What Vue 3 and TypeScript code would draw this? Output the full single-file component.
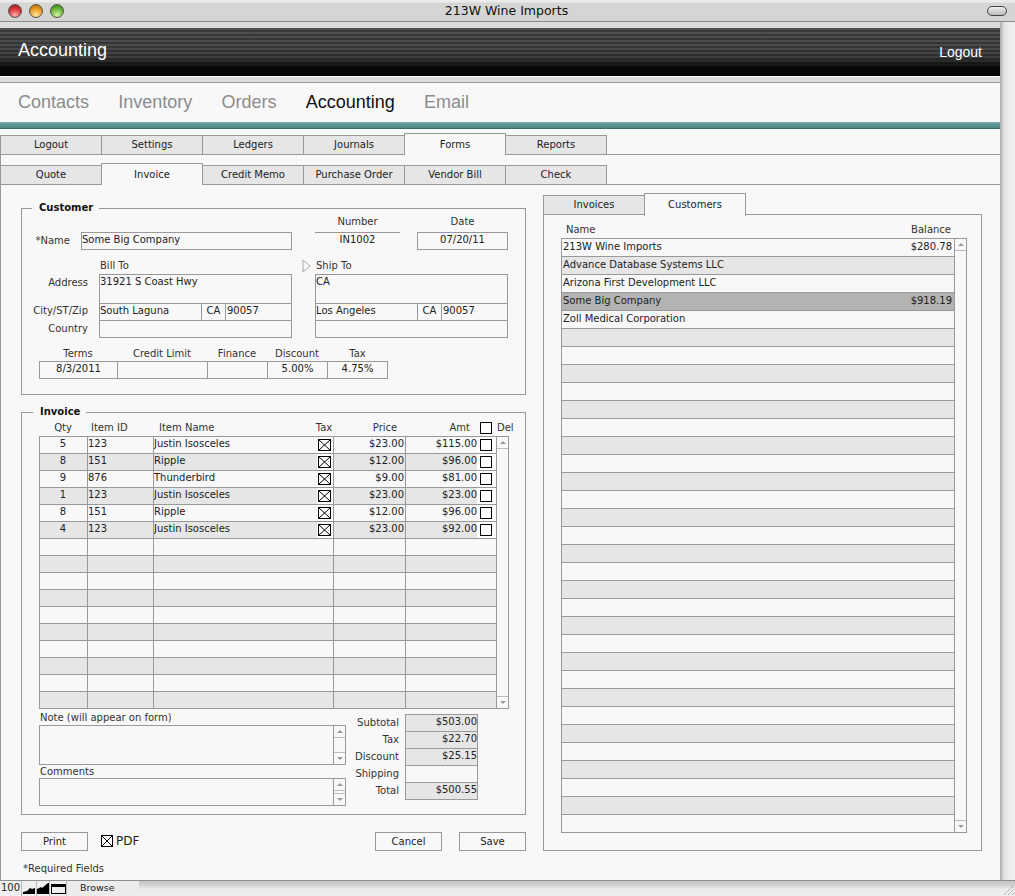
<script setup lang="ts">
const topTabs: string[] = ['Logout', 'Settings', 'Ledgers', 'Journals', 'Forms', 'Reports']
const subTabs: string[] = ['Quote', 'Invoice', 'Credit Memo', 'Purchase Order', 'Vendor Bill', 'Check']
const nav: string[] = ['Contacts', 'Inventory', 'Orders', 'Accounting', 'Email']

interface Address { title: string; address: string; city: string; st: string; zip: string }
const addresses: Address[] = [
  { title: 'Bill To', address: '31921 S Coast Hwy', city: 'South Laguna', st: 'CA', zip: '90057' },
  { title: 'Ship To', address: 'CA', city: 'Los Angeles', st: 'CA', zip: '90057' },
]
const terms = [
  { h: 'Terms', v: '8/3/2011', w: 78 },
  { h: 'Credit Limit', v: '', w: 90 },
  { h: 'Finance', v: '', w: 60 },
  { h: 'Discount', v: '5.00%', w: 60 },
  { h: 'Tax', v: '4.75%', w: 61 },
]
interface Line { qty: string; id: string; name: string; price: string; amt: string }
const filled: Line[] = [
  { qty: '5', id: '123', name: 'Justin Isosceles', price: '$23.00', amt: '$115.00' },
  { qty: '8', id: '151', name: 'Ripple', price: '$12.00', amt: '$96.00' },
  { qty: '9', id: '876', name: 'Thunderbird', price: '$9.00', amt: '$81.00' },
  { qty: '1', id: '123', name: 'Justin Isosceles', price: '$23.00', amt: '$23.00' },
  { qty: '8', id: '151', name: 'Ripple', price: '$12.00', amt: '$96.00' },
  { qty: '4', id: '123', name: 'Justin Isosceles', price: '$23.00', amt: '$92.00' },
]
const blanks: number[] = Array.from({ length: 10 }, (_, i) => i)
const totals = [
  { l: 'Subtotal', v: '$503.00', grey: true },
  { l: 'Tax', v: '$22.70', grey: true },
  { l: 'Discount', v: '$25.15', grey: true },
  { l: 'Shipping', v: '', grey: false },
  { l: 'Total', v: '$500.55', grey: true },
]
const customers = [
  { n: '213W Wine Imports', b: '$280.78' },
  { n: 'Advance Database Systems LLC', b: '' },
  { n: 'Arizona First Development LLC', b: '' },
  { n: 'Some Big Company', b: '$918.19', sel: true },
  { n: 'Zoll Medical Corporation', b: '' },
  ...Array.from({ length: 28 }, () => ({ n: '', b: '' })),
]
</script>

<template>
  <div class="screen">
    <header class="titlebar">
      <div class="lights">
        <span class="light red"></span><span class="light amber"></span><span class="light green"></span>
      </div>
      <span class="title">213W Wine Imports</span>
      <span class="pill"></span>
    </header>
    <div class="middle">
      <div class="win">
        <div class="strip"></div>
        <div class="hero">
          <span class="hero-title">Accounting</span>
          <span class="hero-logout">Logout</span>
        </div>
        <div class="strip2"></div>
        <nav class="nav">
          <span v-for="n in nav" :key="n" class="nav-item" :class="{ on: n === 'Accounting' }">{{ n }}</span>
        </nav>
        <div class="teal"></div>
        <div class="tabs first">
          <span v-for="t in topTabs" :key="t" class="tab" :class="{ active: t === 'Forms' }">{{ t }}</span>
        </div>
        <div class="tabs second">
          <span v-for="t in subTabs" :key="t" class="tab" :class="{ active: t === 'Invoice' }">{{ t }}</span>
        </div>
        <main class="body">
          <div class="left">
            <section class="group cust">
              <span class="legend">Customer</span>
              <div class="row-name">
                <span class="lbl name-lbl">*Name</span>
                <span class="field f-name">Some Big Company</span>
                <div class="col f-number">
                  <span class="cap">Number</span>
                  <span class="field numfield">IN1002</span>
                </div>
                <div class="col f-date">
                  <span class="cap">Date</span>
                  <span class="field center">07/20/11</span>
                </div>
              </div>
              <div class="row-addr">
                <div class="addr-labels">
                  <span class="al a1">Address</span>
                  <span class="al a2">City/ST/Zip</span>
                  <span class="al a3">Country</span>
                </div>
                <div v-for="(a, i) in addresses" :key="a.title" class="addr" :class="{ ship: i === 1 }">
                  <div class="addr-title">
                    <svg v-if="i === 1" class="copy" width="9" height="14" viewBox="0 0 9 14">
                      <path d="M1 1 L8 7 L1 13 Z" fill="#f8f8f8" stroke="#aaa" />
                    </svg>
                    {{ a.title }}
                  </div>
                  <div class="addr-box">
                    <div class="addr-line tall">{{ a.address }}</div>
                    <div class="addr-line split">
                      <span class="c-city">{{ a.city }}</span><span class="c-st">{{ a.st }}</span><span class="c-zip">{{ a.zip }}</span>
                    </div>
                    <div class="addr-line last"></div>
                  </div>
                </div>
              </div>
              <div class="terms">
                <div v-for="t in terms" :key="t.h" class="term" :style="{ width: t.w + 'px' }">
                  <span class="term-h">{{ t.h }}</span>
                  <span class="term-v">{{ t.v }}</span>
                </div>
              </div>
            </section>

            <section class="group inv">
              <span class="legend">Invoice</span>
              <div class="inv-head">
                <span class="h-qty">Qty</span>
                <span class="h-id">Item ID</span>
                <span class="h-name">Item Name</span>
                <span class="h-tax">Tax</span>
                <span class="h-price">Price</span>
                <span class="h-amt">Amt</span>
                <span class="check head-check"></span>
                <span class="h-del">Del</span>
              </div>
              <div class="inv-list">
                <div class="inv-rows">
                  <div v-for="(l, i) in filled" :key="i" class="inv-row" :class="{ alt: i % 2 === 1 }">
                    <span class="cell tc">{{ l.qty }}</span>
                    <span class="cell">{{ l.id }}</span>
                    <span class="cell name-cell">
                      <span>{{ l.name }}</span>
                      <span class="check-wrap tax-wrap">
                        <svg class="xbox" width="13" height="12" viewBox="0 0 13 12"><rect x=".5" y=".5" width="12" height="11" fill="#fff" stroke="#000" /><path d="M1 1 L12 11 M12 1 L1 11" stroke="#000" /></svg>
                      </span>
                    </span>
                    <span class="cell tr">{{ l.price }}</span>
                    <span class="cell amt-cell">
                      <span>{{ l.amt }}</span>
                      <span class="check-wrap del-wrap"><span class="check"></span></span>
                    </span>
                  </div>
                  <div v-for="b in blanks" :key="'b' + b" class="inv-row" :class="{ alt: b % 2 === 1 }">
                    <span class="cell"></span><span class="cell"></span><span class="cell"></span><span class="cell"></span><span class="cell"></span>
                  </div>
                </div>
                <div class="scroll">
                  <span class="sb up"><i class="arrow-up"></i></span>
                  <span class="sb down"><i class="arrow-down"></i></span>
                </div>
              </div>
              <div class="inv-foot">
                <div class="notes">
                  <span class="note-lbl">Note (will appear on form)</span>
                  <div class="note note1">
                    <div class="scroll tiny">
                      <span class="sb up"><i class="arrow-up"></i></span>
                      <span class="sb down"><i class="arrow-down"></i></span>
                    </div>
                  </div>
                  <span class="note-lbl second-lbl">Comments</span>
                  <div class="note note2">
                    <div class="scroll tiny">
                      <span class="sb up"><i class="arrow-up"></i></span>
                      <span class="sb down"><i class="arrow-down"></i></span>
                    </div>
                  </div>
                </div>
                <div class="totals">
                  <div v-for="t in totals" :key="t.l" class="total-row">
                    <span class="total-l">{{ t.l }}</span>
                    <span class="total-v" :class="{ grey: t.grey }">{{ t.v }}</span>
                  </div>
                </div>
              </div>
            </section>

            <div class="actions">
              <button class="btn" type="button">Print</button>
              <svg class="pdf-box" width="12" height="12" viewBox="0 0 12 12"><rect x=".5" y=".5" width="11" height="11" fill="#fff" stroke="#000" /><path d="M1 1 L11 11 M11 1 L1 11" stroke="#000" /></svg>
              <span class="pdf">PDF</span>
              <span class="spacer"></span>
              <button class="btn" type="button">Cancel</button>
              <button class="btn save" type="button">Save</button>
            </div>
            <div class="required">*Required Fields</div>
          </div>

          <div class="right">
            <div class="rtabs">
              <span class="tab">Invoices</span>
              <span class="tab active">Customers</span>
            </div>
            <div class="rpanel">
              <div class="rhead"><span>Name</span><span>Balance</span></div>
              <div class="rlist">
                <div class="rrows">
                  <div v-for="(c, i) in customers" :key="i" class="rrow" :class="{ alt: i % 2 === 1, sel: c.sel }">
                    <span>{{ c.n }}</span><span>{{ c.b }}</span>
                  </div>
                </div>
                <div class="scroll">
                  <span class="sb up"><i class="arrow-up"></i></span>
                  <span class="sb down"><i class="arrow-down"></i></span>
                </div>
              </div>
            </div>
          </div>
        </main>
      </div>
      <div class="edge"></div>
    </div>
    <footer class="status">
      <span class="zoomv">100</span>
      <span class="sicon s1">
        <svg width="12" height="9" viewBox="0 0 12 9"><path d="M0 9 V7 L4 6 L7 3 L9 4 L12 3 V9 Z" fill="#000" /></svg>
      </span>
      <span class="sicon s2">
        <svg width="12" height="11" viewBox="0 0 12 11"><path d="M0 11 V6 L4 4 L5 5 L11 0 H12 V11 Z" fill="#000" /></svg>
      </span>
      <span class="sicon win-ic">
        <svg width="15" height="10" viewBox="0 0 15 10"><rect x=".5" y=".5" width="14" height="9" fill="#eee" stroke="#000" /><rect x="0" y="0" width="15" height="3" fill="#000" /></svg>
      </span>
      <span class="mode">Browse</span>
      <span class="grip">
        <svg width="12" height="12" viewBox="0 0 12 12"><path d="M1 11 L11 1 M5 11 L11 5 M9 11 L11 9" stroke="#888" stroke-dasharray="1 1" fill="none" /></svg>
      </span>
    </footer>
  </div>
</template>

<style>
html, body { margin: 0; padding: 0; background: #f8f8f8; }
</style>

<style scoped>
.screen {
  width: 1015px; height: 896px; overflow: hidden;
  display: flex; flex-direction: column;
  background: #f8f8f8; color: #222;
  font: 10px/15px "DejaVu Sans", Verdana, sans-serif;
  box-sizing: border-box;
}
.screen * { box-sizing: border-box; }

/* title bar */
.titlebar {
  height: 22px; flex: none; display: flex; align-items: center;
  background: linear-gradient(#ececec 0, #ececec 2px, #d6d6d4 3px, #d4d4d2 100%);
  border-bottom: 1px solid #8a8a8a;
  padding: 0 8px;
}
.lights { display: flex; gap: 7px; }
.light { width: 14px; height: 14px; border-radius: 50%; border: 1px solid #555; }
.red { background: radial-gradient(circle at 50% 85%, #f8b0b0 0, #d8363a 55%, #8e1a1e 100%); }
.amber { background: radial-gradient(circle at 50% 85%, #fbe6a4 0, #eb9b22 55%, #a8600e 100%); }
.green { background: radial-gradient(circle at 50% 85%, #d4f4ac 0, #6cb53a 55%, #36781a 100%); }
.title { flex: 1; text-align: center; font-size: 12.5px; color: #111; padding-right: 38px; }
.pill { width: 20px; height: 10px; border: 1px solid #444; border-radius: 5px; background: linear-gradient(#eee, #bbb); }

.middle { flex: 1; display: flex; min-height: 0; }
.win { width: 1000px; flex: none; display: flex; flex-direction: column; min-height: 0; }
.edge { flex: 1; background: linear-gradient(90deg, #a9a9a9 0, #c9c9c9 2px, #d8d8d8 3px, #e8e8e8 6px, #f0f0f0 15px); }

.strip { height: 6px; flex: none; background: #dcdcdc; }
.hero {
  height: 48px; flex: none; display: flex; justify-content: space-between;
  color: #fff; font-family: "Liberation Sans", Arial, sans-serif;
  padding: 0 18px;
  background:
    repeating-linear-gradient(#0000 0, #0000 2px, #0000004d 2px, #0000004d 4px),
    linear-gradient(#525252 0, #4a4a4a 40%, #3e3e3e 62%, #202420 72%, #09090b 84%, #060608 100%);
}
.hero-title { font-size: 18px; line-height: 22px; margin-top: 11px; }
.hero-logout { font-size: 14px; line-height: 18px; margin-top: 15px; }
.strip2 { height: 7px; flex: none; border-top: 1px solid #fff; border-bottom: 1px solid #999; background: #dcdcdc; }
.nav {
  height: 39px; flex: none; display: flex; align-items: flex-start; padding: 7px 0 0 18px; gap: 29.2px;
  font: 18px/24px "Liberation Sans", Arial, sans-serif; color: #8c8c8c;
}
.nav-item.on { color: #111; }
.teal { height: 7px; flex: none; background: linear-gradient(#7fb0ac 0, #5f9794 30%, #4f8a88 80%, #2b5a5a 100%); }

/* tabs */
.tabs { display: flex; align-items: flex-end; flex: none; border-bottom: 1px solid #999; }
.tabs.first { height: 26px; }
.tabs.second { height: 30px; border-left: 1px solid #999; }
.tabs.second .tab:first-child { margin-left: -1px; }
.tab {
  width: 102px; height: 20px; margin-right: -1px; margin-bottom: -1px;
  display: flex; align-items: center; justify-content: center; padding-bottom: 1px;
  background: #e6e6e6; border: 1px solid #999; color: #222;
}
.tab.active {
  height: 22px; background: #f8f8f8; border-bottom: 0; position: relative; z-index: 1;
}

/* body */
.body {
  flex: 1; min-height: 0; display: flex; align-items: flex-start;
  border-left: 1px solid #999;
}
.left { width: 505px; margin-left: 20px; margin-top: 23px; flex: none; }
.group { border: 1px solid #999; position: relative; width: 505px; }
.legend {
  position: absolute; top: -8px; left: 10px; background: #f8f8f8; padding: 0 6px 0 7px;
  font-weight: 700; color: #111; line-height: 14px;
}
.inv .legend { left: 11px; }
.cust { height: 187px; padding-left: 17px; }
.inv { height: 403px; margin-top: 17px; padding-left: 17px; }
.lbl, .cap, .al { color: #333; }
.field {
  display: block; height: 18px; border: 1px solid #999; line-height: 14px; padding: 0; overflow: hidden;
  white-space: nowrap;
}
.center { text-align: center; }
.row-name { display: flex; align-items: flex-end; height: 41px; margin-left: -17px; }
.name-lbl { width: 59px; line-height: 18px; text-align: right; padding-right: 11px; height: 18px; }
.f-name { width: 211px; }
.col { display: flex; flex-direction: column; }
.cap { text-align: center; line-height: 13px; height: 17px; }
.f-number { width: 85px; margin-left: 23px; }
.numfield { border-width: 1px 0 0; text-align: center; }
.f-date { width: 91px; margin-left: 17px; }

.row-addr { display: flex; margin-left: -17px; margin-top: 8px; height: 82px; }
.addr-labels { width: 66px; display: flex; flex-direction: column; align-items: flex-end; padding-top: 17px; }
.al { display: block; line-height: 15px; }
.a2 { margin-top: 13px; }
.a3 { margin-top: 3px; }
.addr { width: 193px; margin-left: 11px; }
.addr.ship { margin-left: 23px; }
.addr-title { height: 16px; line-height: 16px; padding-left: 1px; position: relative; color: #333; }
.copy { position: absolute; left: -13px; top: 1px; }
.addr-box { border: 1px solid #999; }
.addr-line { height: 17px; border-bottom: 1px solid #999; line-height: 14px; padding-left: 0; }
.addr-line.tall { height: 29px; }
.addr-line.last { border-bottom: 0; height: 16px; }
.addr-line.split { display: flex; padding: 0; }
.c-city { width: 102px; border-right: 1px solid #999; }
.c-st { width: 24px; text-align: center; border-right: 1px solid #999; }
.c-zip { flex: 1; padding-left: 1px; }

.terms { display: flex; margin-top: 7px; }
.term { display: flex; flex-direction: column; }
.term-h { height: 14px; line-height: 13px; text-align: center; color: #333; }
.term-v { height: 18px; border: 1px solid #999; border-right: 0; text-align: center; line-height: 14px; }
.term:last-child .term-v { border-right: 1px solid #999; }

/* invoice */
.inv-head { display: flex; height: 23px; padding-top: 7px; line-height: 15px; color: #333; }
.inv-head span { display: block; flex: none; }
.h-qty { width: 48px; text-align: center; }
.h-id { width: 66px; padding-left: 4px; }
.h-name { width: 150px; padding-left: 6px; }
.h-tax { width: 40px; text-align: center; margin-left: 1px; }
.h-price { width: 60px; text-align: center; margin-left: 11px; }
.h-amt { width: 55px; text-align: right; }
.inv-head .head-check { margin-left: 10px; margin-top: 2px; }
.h-del { margin-left: 5px; }
.check { display: inline-block; width: 12px; height: 12px; border: 1px solid #000; background: #fff; flex: none; }
.inv-list { display: flex; width: 470px; }
.inv-rows { width: 458px; border-top: 1px solid #999; border-left: 1px solid #999; flex: none; }
.inv-row { display: grid; grid-template-columns: 48px 66px 180px 72px 1fr; height: 17px; margin-left: -1px; }
.inv-row.alt { background: #e6e6e6; }
.cell { border-left: 1px solid #999; border-bottom: 1px solid #999; line-height: 13px; padding: 0 1px 0 0; overflow: hidden; white-space: nowrap; }
.inv-row .cell:last-child { border-right: 1px solid #999; }
.tc { text-align: center; }
.tr { text-align: right; }
.name-cell { display: flex; justify-content: space-between; padding-right: 0; }
.amt-cell { display: flex; padding: 0; }
.amt-cell > span:first-child { width: 71px; text-align: right; flex: none; }
.check-wrap { background: #fff; height: 16px; display: flex; align-items: flex-start; padding-top: 2px; }
.tax-wrap { width: 16px; padding-left: 1px; }
.del-wrap { flex: 1; padding-left: 3px; }
.xbox { display: block; }

.scroll {
  width: 13px; flex: none; border: 1px solid #999; margin-left: -1px;
  display: flex; flex-direction: column; justify-content: space-between;
}
.sb { height: 12px; display: flex; align-items: center; justify-content: center; background: #f8f8f8; }
.sb.up { border-bottom: 1px solid #bbb; }
.sb.down { border-top: 1px solid #bbb; }
.arrow-up { width: 0; height: 0; border: 3px solid transparent; border-top: 0; border-bottom: 3px solid #999; }
.arrow-down { width: 0; height: 0; border: 3px solid transparent; border-bottom: 0; border-top: 3px solid #999; }

.inv-foot { display: flex; }
.notes { width: 307px; flex: none; }
.note-lbl { display: block; line-height: 14px; height: 16px; padding-left: 1px; padding-top: 2px; color: #333; }
.second-lbl { height: 13px; padding-top: 0; line-height: 13px; }
.note { border: 1px solid #999; display: flex; justify-content: flex-end; }
.note1 { height: 40px; }
.note2 { height: 28px; }
.scroll.tiny { border-width: 0 0 0 1px; margin-left: 0; width: 12px; }
.totals { padding-top: 5px; width: 132px; flex: none; }
.total-row { display: flex; height: 17px; }
.total-l { width: 53px; text-align: right; line-height: 17px; margin-right: 6px; flex: none; color: #333; white-space: nowrap; }
.total-v { width: 73px; height: 18px; border: 1px solid #999; text-align: right; line-height: 14px; flex: none; }
.total-v.grey { background: #e6e6e6; }

.actions { display: flex; align-items: flex-start; margin-top: 17px; height: 20px; width: 505px; }
.btn { width: 67px; height: 19px; border: 1px solid #999; background: #f8f8f8; font: inherit; color: #222; padding: 0; }
.pdf-box { margin-left: 13px; margin-top: 3px; flex: none; }
.pdf { font-size: 12px; line-height: 19px; margin-left: 3px; }
.spacer { flex: 1; }
.save { margin-left: 17px; }
.required { margin-top: 9px; padding-left: 2px; color: #333; }

/* right */
.right { margin-left: 17px; margin-top: 8px; width: 439px; flex: none; }
.rtabs { display: flex; align-items: flex-end; height: 22px; }
.rpanel { height: 637px; border: 1px solid #999; margin-top: -1px; background: #f8f8f8; padding: 7px 14px 0 17px; }
.rtabs .tab { margin-bottom: 0; }
.rtabs .tab.active { height: 23px; margin-bottom: -1px; }
.rhead { display: flex; justify-content: space-between; height: 16px; padding: 0 16px 0 5px; width: 406px; line-height: 15px; color: #333; }
.rlist { display: flex; width: 406px; height: 595px; }
.rrows { width: 394px; flex: none; border-left: 1px solid #999; border-top: 1px solid #999; }
.rrow { height: 18px; display: flex; justify-content: space-between; border-bottom: 1px solid #999; padding: 0 3px 0 1px; line-height: 15px; white-space: nowrap; }
.rrow.alt { background: #e6e6e6; }
.rrow.sel { background: #b3b3b3; }

/* status */
.status {
  height: 16px; flex: none; display: flex; align-items: center; position: relative;
  border-top: 1px solid #8f8f8f;
  background: linear-gradient(#c4c4c4 0, #d0d0d0 4px, #ececec 8px, #eeeeee 100%);
  color: #222; font-size: 10px;
}
.zoomv { width: 22px; padding-left: 1px; background: #f0f0f0; line-height: 14px; height: 15px; border-right: 1px solid #bbb; }
.sicon { height: 15px; display: flex; align-items: flex-end; justify-content: center; background: #f0f0f0; border-right: 1px solid #bbb; padding-bottom: 2px; }
.s1 { width: 15px; }
.s2 { width: 13px; }
.win-ic { width: 17px; }
.mode { width: 72px; height: 15px; background: #ececec; padding-left: 13px; line-height: 14px; font-size: 9.5px; }
.grip { position: absolute; right: 0; bottom: 0; width: 12px; height: 12px; line-height: 0; }
</style>
